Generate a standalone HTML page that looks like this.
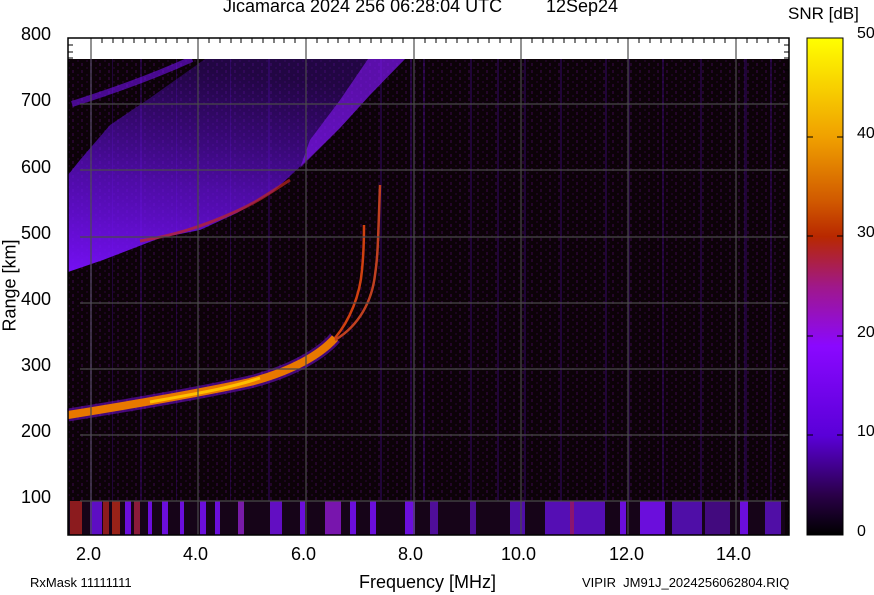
<!DOCTYPE html>
<html><head><meta charset="utf-8"><style>
html,body{margin:0;padding:0;background:#fff;}
body{width:874px;height:595px;overflow:hidden;position:relative;font-family:"Liberation Sans",sans-serif;}
.t{position:absolute;color:#000;white-space:pre;}
</style></head><body>
<svg width="874" height="595" style="position:absolute;left:0;top:0">
<defs>
<linearGradient id="cb" x1="0" y1="0" x2="0" y2="1">
<stop offset="0" stop-color="#ffff00"/>
<stop offset="0.2" stop-color="#f0a000"/>
<stop offset="0.33" stop-color="#d05800"/>
<stop offset="0.4" stop-color="#b82800"/>
<stop offset="0.5" stop-color="#a0188a"/>
<stop offset="0.62" stop-color="#8a08ff"/>
<stop offset="0.8" stop-color="#5a00d8"/>
<stop offset="0.92" stop-color="#2a0048"/>
<stop offset="1" stop-color="#000"/>
</linearGradient>
<linearGradient id="fg" x1="0" y1="1" x2="0.2" y2="0">
<stop offset="0" stop-color="#7a10ff" stop-opacity="0.95"/>
<stop offset="0.45" stop-color="#6a10e8" stop-opacity="0.7"/>
<stop offset="1" stop-color="#4a0cb0" stop-opacity="0.35"/>
</linearGradient>
<pattern id="nz" width="9" height="7" patternUnits="userSpaceOnUse">
<rect width="9" height="7" fill="#0c0208"/>
<rect x="0" y="0" width="2" height="3" fill="#24062a"/>
<rect x="5" y="4" width="2" height="2" fill="#1c0420"/>
</pattern>
</defs>
<rect x="68" y="59" width="721" height="476" fill="url(#nz)"/>
<g fill="#6a10e0" opacity="0.22">
<rect x="90" y="59" width="2" height="442"/><rect x="112" y="59" width="1" height="442"/><rect x="140" y="59" width="2" height="442"/>
<rect x="176" y="59" width="1" height="442"/><rect x="230" y="59" width="1" height="442"/><rect x="268" y="59" width="2" height="442"/>
<rect x="380" y="59" width="2" height="442"/><rect x="410" y="59" width="2" height="442"/><rect x="423" y="59" width="2" height="442"/>
<rect x="470" y="59" width="2" height="442"/><rect x="497" y="59" width="2" height="442"/><rect x="524" y="59" width="2" height="442"/>
<rect x="560" y="59" width="2" height="442"/><rect x="605" y="59" width="2" height="442"/><rect x="628" y="59" width="2" height="442"/>
<rect x="662" y="59" width="2" height="442"/><rect x="700" y="59" width="2" height="442"/><rect x="744" y="59" width="3" height="442"/>
<rect x="770" y="59" width="2" height="442"/>
</g>
<path d="M72,104 C110,92 150,78 192,59" stroke="#7a10ff" stroke-width="6" fill="none" opacity="0.55"/>
<path d="M68,272 L103,260 L160,238 L200,230 L237,213 L273,192 L307,160 L340,128 L370,95 L405,59 L205,59 L150,98 L110,125 L80,160 L68,175 Z" fill="url(#fg)"/>
<path d="M300,168 L340,128 L370,95 L405,59 L368,59 L340,100 L310,140 Z" fill="#8a18ff" opacity="0.55"/>
<path d="M140,241 C170,236 200,228 237,211 C255,203 265,196 290,180" stroke="#c02820" stroke-width="3" fill="none" opacity="0.7"/>
<path d="M68,415 C130,405 200,393 250,382 C290,372 320,355 335,338" stroke="#8a10ff" stroke-width="13" fill="none" opacity="0.45"/>
<path d="M68,415 C130,405 200,393 250,382 C290,372 320,355 335,338" stroke="#e87800" stroke-width="8" fill="none"/>
<path d="M150,402 C200,393 230,388 260,378" stroke="#ffc000" stroke-width="3" fill="none"/>
<path d="M335,338 C350,320 360,295 362,270 C364,250 364,235 364,225" stroke="#d04010" stroke-width="2.5" fill="none"/>
<path d="M335,340 C360,325 372,300 375,275 C378,255 378,240 380,185" stroke="#c04020" stroke-width="2.5" fill="none"/>
<rect x="68" y="501" width="717" height="34" fill="#160418"/>
<g fill="#7a10ff" opacity="0.85">
<rect x="70" y="501" width="12" height="34" fill="#a02020"/><rect x="90" y="501" width="12" height="34" fill="#6a10e0"/>
<rect x="103" y="501" width="6" height="34" fill="#a02020"/><rect x="112" y="501" width="8" height="34" fill="#b02818"/>
<rect x="125" y="501" width="6" height="34"/><rect x="134" y="501" width="6" height="34" fill="#a02040"/>
<rect x="148" y="501" width="4" height="34"/><rect x="162" y="501" width="6" height="34"/><rect x="180" y="501" width="4" height="34"/>
<rect x="200" y="501" width="6" height="34"/><rect x="215" y="501" width="5" height="34"/><rect x="238" y="501" width="6" height="34" fill="#8a20c0"/>
<rect x="270" y="501" width="12" height="34" fill="#7010e0"/><rect x="300" y="501" width="5" height="34"/><rect x="325" y="501" width="16" height="34" fill="#8a18c8"/>
<rect x="350" y="501" width="6" height="34"/><rect x="370" y="501" width="6" height="34"/>
<rect x="405" y="501" width="10" height="34"/><rect x="430" y="501" width="8" height="34" fill="#5a10b0"/>
<rect x="470" y="501" width="6" height="34" fill="#5a10b0"/><rect x="510" y="501" width="15" height="34" fill="#5a10c0"/>
<rect x="545" y="501" width="60" height="34" fill="#6010d0"/><rect x="570" y="501" width="4" height="34" fill="#a01880"/>
<rect x="620" y="501" width="6" height="34"/><rect x="640" y="501" width="25" height="34"/>
<rect x="672" y="501" width="30" height="34" fill="#5a10c0"/><rect x="705" y="501" width="25" height="34" fill="#4a0c90"/>
<rect x="740" y="501" width="8" height="34"/><rect x="765" y="501" width="16" height="34" fill="#5a10c0"/>
</g>
<rect x="68" y="38" width="721" height="21" fill="#fff"/>
<g stroke="#4a4a4a" stroke-width="1.2">
<line x1="91" y1="38" x2="91" y2="535"/><line x1="198" y1="38" x2="198" y2="535"/><line x1="306" y1="38" x2="306" y2="535"/>
<line x1="414" y1="38" x2="414" y2="535"/><line x1="521" y1="38" x2="521" y2="535"/><line x1="628" y1="38" x2="628" y2="535"/>
<line x1="736" y1="38" x2="736" y2="535"/>
<line x1="80" y1="104" x2="789" y2="104"/><line x1="80" y1="170" x2="789" y2="170"/><line x1="80" y1="237" x2="789" y2="237"/>
<line x1="80" y1="303" x2="789" y2="303"/><line x1="80" y1="369" x2="789" y2="369"/><line x1="80" y1="435" x2="789" y2="435"/>
<line x1="80" y1="501" x2="789" y2="501"/>
</g>
<g stroke="#000" stroke-width="1">
<path d="M102,38v5M113,38v5M123,38v5M134,38v5M145,38v5M156,38v5M166,38v5M177,38v5M188,38v5M209,38v5M220,38v5M231,38v5M241,38v5M252,38v5M263,38v5M274,38v5M284,38v5M295,38v5M317,38v5M328,38v5M338,38v5M349,38v5M360,38v5M371,38v5M381,38v5M392,38v5M403,38v5M425,38v5M436,38v5M446,38v5M457,38v5M468,38v5M478,38v5M489,38v5M500,38v5M511,38v5M532,38v5M543,38v5M553,38v5M564,38v5M575,38v5M586,38v5M596,38v5M607,38v5M618,38v5M639,38v5M650,38v5M661,38v5M671,38v5M682,38v5M693,38v5M704,38v5M714,38v5M725,38v5M747,38v5M757,38v5M768,38v5M779,38v5"/>
<path d="M68,45h5M68,52h5M68,58h5M784,45h5M784,52h5M784,58h5M784,70h5M784,82h5M784,94h5"/>
</g>
<rect x="68" y="38" width="721" height="497" fill="none" stroke="#000" stroke-width="1.5"/>
<rect x="807" y="38" width="36" height="497" fill="url(#cb)" stroke="#000" stroke-width="1"/>
<g stroke="#000"><path d="M807,137h6M837,137h6M807,236h6M837,236h6M807,336h6M837,336h6M807,435h6M837,435h6"/></g>
</svg>
<div class="t" style="left:223px;top:-4px;font-size:18px">Jicamarca 2024 256 06:28:04 UTC</div>
<div class="t" style="left:546px;top:-4px;font-size:18px">12Sep24</div>
<div class="t" style="left:788px;top:4px;font-size:17px">SNR [dB]</div>
<div class="t" style="left:857px;top:25px;font-size:16px">50</div>
<div class="t" style="left:857px;top:125px;font-size:16px">40</div>
<div class="t" style="left:857px;top:224px;font-size:16px">30</div>
<div class="t" style="left:857px;top:324px;font-size:16px">20</div>
<div class="t" style="left:857px;top:423px;font-size:16px">10</div>
<div class="t" style="left:857px;top:523px;font-size:16px">0</div>
<div class="t" style="left:21px;top:24px;font-size:18px">800</div>
<div class="t" style="left:21px;top:90px;font-size:18px">700</div>
<div class="t" style="left:21px;top:157px;font-size:18px">600</div>
<div class="t" style="left:21px;top:223px;font-size:18px">500</div>
<div class="t" style="left:21px;top:289px;font-size:18px">400</div>
<div class="t" style="left:21px;top:355px;font-size:18px">300</div>
<div class="t" style="left:21px;top:421px;font-size:18px">200</div>
<div class="t" style="left:21px;top:487px;font-size:18px">100</div>
<div class="t" style="left:-36px;top:275px;font-size:18px;transform:rotate(-90deg)">Range [km]</div>
<div class="t" style="left:76px;top:544px;font-size:18px">2.0</div>
<div class="t" style="left:183px;top:544px;font-size:18px">4.0</div>
<div class="t" style="left:291px;top:544px;font-size:18px">6.0</div>
<div class="t" style="left:398px;top:544px;font-size:18px">8.0</div>
<div class="t" style="left:501px;top:544px;font-size:18px">10.0</div>
<div class="t" style="left:609px;top:544px;font-size:18px">12.0</div>
<div class="t" style="left:716px;top:544px;font-size:18px">14.0</div>
<div class="t" style="left:359px;top:572px;font-size:18px">Frequency [MHz]</div>
<div class="t" style="left:30px;top:575px;font-size:13px">RxMask 11111111</div>
<div class="t" style="left:582px;top:575px;font-size:13px">VIPIR  JM91J_2024256062804.RIQ</div>
</body></html>
